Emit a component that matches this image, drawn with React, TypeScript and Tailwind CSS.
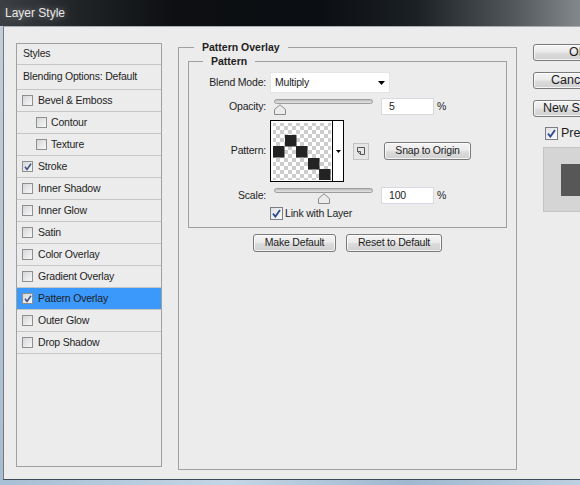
import React from "react";

const sans = "font-['Liberation_Sans',Arial,sans-serif]";

function ListBox({ checked }: { checked?: boolean }) {
  return (
    <span className="flex h-[11px] w-[11px] shrink-0 items-center justify-center border border-[#8f8f8f] bg-[linear-gradient(135deg,#d4d6d9_0%,#f8f8f8_100%)]">
      {checked && (
        <svg width="8" height="8" viewBox="0 0 8 8">
          <path d="M1 3.8 L3 6.5 L7 0.8" fill="none" stroke="#3b4f80" strokeWidth="1.5" />
        </svg>
      )}
    </span>
  );
}

function BigBox({ checked }: { checked?: boolean }) {
  return (
    <span className="flex h-[13px] w-[13px] shrink-0 items-center justify-center border border-[#7b7e84] bg-[linear-gradient(135deg,#dfe2e6_0%,#fafafa_100%)]">
      {checked && (
        <svg width="9" height="9" viewBox="0 0 9 9">
          <path d="M1 4.6 L3.4 7.6 L8 1" fill="none" stroke="#2e4a8f" strokeWidth="1.8" />
        </svg>
      )}
    </span>
  );
}

function Btn({ children, className = "" }: { children: React.ReactNode; className?: string }) {
  return (
    <div
      className={`flex shrink-0 items-center rounded-[3px] border border-[#7a7a7a] bg-[linear-gradient(#f4f4f4_0%,#ebebeb_46%,#dcdcdc_54%,#d0d0d0_100%)] shadow-[inset_0_0_0_1px_rgba(255,255,255,0.75)] text-[#1b1b1b] ${className}`}
    >
      {children}
    </div>
  );
}

function Slider({ thumb }: { thumb: string }) {
  return (
    <div className="relative h-[17px] w-[99px] shrink-0">
      <div className="mt-[2px] h-[5px] rounded-full border border-[#9c9c9c] bg-[linear-gradient(#bdbdbd,#e4e4e4)]" />
      <svg className={`absolute top-[5px] ${thumb}`} width="12" height="11" viewBox="0 0 12 11">
        <path d="M0.5 10.5 V5.5 L6 0.8 L11.5 5.5 V10.5 Z" fill="#ececec" stroke="#8a8a8a" />
      </svg>
    </div>
  );
}

function NumInput({ value }: { value: string }) {
  return (
    <div className="flex h-[17px] w-[53px] shrink-0 items-center border border-[#d5dae0] bg-white pl-[7px]">
      {value}
    </div>
  );
}

const items: { label: string; checked?: boolean; indent?: boolean; selected?: boolean }[] = [
  { label: "Bevel & Emboss" },
  { label: "Contour", indent: true },
  { label: "Texture", indent: true },
  { label: "Stroke", checked: true },
  { label: "Inner Shadow" },
  { label: "Inner Glow" },
  { label: "Satin" },
  { label: "Color Overlay" },
  { label: "Gradient Overlay" },
  { label: "Pattern Overlay", checked: true, selected: true },
  { label: "Outer Glow" },
  { label: "Drop Shadow" },
];

function PatternSwatch() {
  const squares = [
    [12, 13],
    [0, 24],
    [23, 24],
    [35, 36],
    [46, 47],
  ];
  return (
    <div className="flex h-[62px] w-[74px] shrink-0 border border-black bg-white">
      <div className="p-[1px]">
        <svg width="59" height="58" viewBox="0 0 59 58" className="block">
          <defs>
            <pattern id="chk" width="8" height="8" patternUnits="userSpaceOnUse">
              <rect width="8" height="8" fill="#ffffff" />
              <rect width="4" height="4" fill="#cdcdcd" />
              <rect x="4" y="4" width="4" height="4" fill="#cdcdcd" />
            </pattern>
          </defs>
          <rect x="1" y="1" width="58" height="57" fill="url(#chk)" />
          {squares.map(([x, y], i) => (
            <rect key={i} x={x + 1} y={y} width="11.5" height="11.5" fill="#232323" />
          ))}
        </svg>
      </div>
      <div className="ml-auto flex w-[11px] items-center justify-center border-l border-black">
        <svg width="5" height="3" viewBox="0 0 5 3">
          <path d="M0 0 H5 L2.5 3 Z" fill="#000" />
        </svg>
      </div>
    </div>
  );
}

export default function App() {
  return (
    <div className={`flex h-[485px] w-[580px] flex-col overflow-hidden bg-[#ececec] ${sans} text-[10.5px] tracking-[-0.2px] text-[#1e1e1e]`}>
      {/* title bar */}
      <div className="flex h-[26px] shrink-0 items-center bg-[linear-gradient(90deg,#3c3f43_0%,#202326_14%,#0d0f12_30%,#0b0e12_55%,#1c2125_72%,#50555a_88%,#83888d_100%)] pl-[5px]">
        <span className="text-[12px] tracking-normal text-[#e8e8e8] [text-shadow:0_0_7px_rgba(150,150,150,0.95)]">
          Layer Style
        </span>
      </div>

      <div className="flex flex-1">
        <div className="w-[3px] shrink-0 bg-[linear-gradient(#c4cdd6,#a9bccd)]" />
        <div className="flex flex-1 border-l border-t border-b border-l-[#6f7a86] border-t-[#a8adb2] border-b-[#3d4a58] pl-[12px] pt-[13px]">
          {/* left panel */}
          <div className="mt-[3px] flex h-[424px] w-[146px] shrink-0 flex-col border border-[#a0a0a0]">
            <div className="flex h-[21px] items-center border-b border-[#c6c6c6] pl-[6px]">Styles</div>
            <div className="flex h-[25px] items-center border-b border-[#c6c6c6] pl-[6px]">Blending Options: Default</div>
            {items.map((it) => (
              <div
                key={it.label}
                className={`flex h-[22px] items-center border-b border-[#c6c6c6] ${it.indent ? "gap-[4px] pl-[19px]" : "gap-[5px] pl-[5px]"} ${it.selected ? "bg-[#3b99fc]" : ""}`}
              >
                <ListBox checked={it.checked} />
                <span>{it.label}</span>
              </div>
            ))}
          </div>

          {/* main fieldset */}
          <fieldset className="ml-[16px] h-[430px] w-[339px] shrink-0 border border-[#a0a0a0] px-[9px]">
            <legend className="ml-[6px] px-[8px] text-[10.5px] font-bold leading-[14px] tracking-normal">Pattern Overlay</legend>
            <fieldset className="border border-[#a0a0a0] pb-[7px]">
              <legend className="ml-[14px] px-[8px] font-bold leading-[14px] tracking-normal">Pattern</legend>

              <div className="mt-[4px] flex h-[21px] items-center">
                <span className="w-[77px] shrink-0 text-right">Blend Mode:</span>
                <div className="ml-[4px] flex h-[21px] w-[120px] items-center justify-between border border-[#e4e4e4] bg-white pl-[4px] pr-[4px]">
                  <span>Multiply</span>
                  <svg width="7" height="4" viewBox="0 0 7 4">
                    <path d="M0 0 H7 L3.5 4 Z" fill="#000" />
                  </svg>
                </div>
              </div>

              <div className="mt-[5px] flex h-[17px] items-center">
                <span className="w-[77px] shrink-0 text-right">Opacity:</span>
                <div className="ml-[8px]">
                  <Slider thumb="left-0" />
                </div>
                <div className="ml-[8px]">
                  <NumInput value="5" />
                </div>
                <span className="ml-[3px]">%</span>
              </div>

              <div className="mt-[5px] flex h-[62px] items-center">
                <span className="w-[77px] shrink-0 text-right">Pattern:</span>
                <div className="ml-[4px]">
                  <PatternSwatch />
                </div>
                <div className="ml-[9px] flex h-[17px] w-[16px] items-center justify-center border border-[#c2c2c2] bg-[#e6e6e6]">
                  <svg width="10" height="10" viewBox="0 0 10 10">
                    <path d="M1.5 1.5 H8.5 V8.5 H4.5 L1.5 5.5 Z M1.5 5.5 H4.5 V8.5" fill="none" stroke="#555" />
                  </svg>
                </div>
                <Btn className="ml-[15px] h-[18px] w-[87px] justify-center">Snap to Origin</Btn>
              </div>

              <div className="mt-[5px] flex h-[17px] items-center">
                <span className="w-[77px] shrink-0 text-right">Scale:</span>
                <div className="ml-[8px]">
                  <Slider thumb="left-[44px]" />
                </div>
                <div className="ml-[8px]">
                  <NumInput value="100" />
                </div>
                <span className="ml-[3px]">%</span>
              </div>

              <div className="mt-[3px] flex h-[13px] items-center gap-[2px] pl-[81px]">
                <BigBox checked />
                <span>Link with Layer</span>
              </div>
            </fieldset>

            <div className="mt-[6px] flex justify-center gap-[10px]">
              <Btn className="h-[18px] w-[83px] justify-center">Make Default</Btn>
              <Btn className="h-[18px] w-[96px] justify-center">Reset to Default</Btn>
            </div>
          </fieldset>

          {/* right column */}
          <div className="ml-[16px] flex shrink-0 flex-col text-[12.5px] tracking-normal">
            <Btn className="mt-[4px] h-[17px] w-[88px] border-[#3c7fb1] pl-[35px] shadow-[inset_0_0_0_1px_#b5dcf5]">OK</Btn>
            <Btn className="mt-[11px] h-[17px] w-[88px] pl-[17px]">Cancel</Btn>
            <Btn className="mt-[11px] h-[17px] w-[88px] pl-[9px]">New Style...</Btn>
            <div className="mt-[10px] flex h-[13px] items-center gap-[3px] pl-[12px]">
              <BigBox checked />
              <span>Preview</span>
            </div>
            <div className="ml-[10px] mt-[7px] h-[65px] w-[70px] border border-[#c4c4c4] bg-[#d5d5d5] pl-[17px] pt-[16px]">
              <div className="h-[32px] w-[32px] bg-[#575757]" />
            </div>
          </div>
        </div>
      </div>
      <div className="h-[5px] shrink-0 bg-[linear-gradient(90deg,#a7bfd4,#c3d6e6_40%,#9fb8cf_70%,#bcd0e1)]" />
    </div>
  );
}
